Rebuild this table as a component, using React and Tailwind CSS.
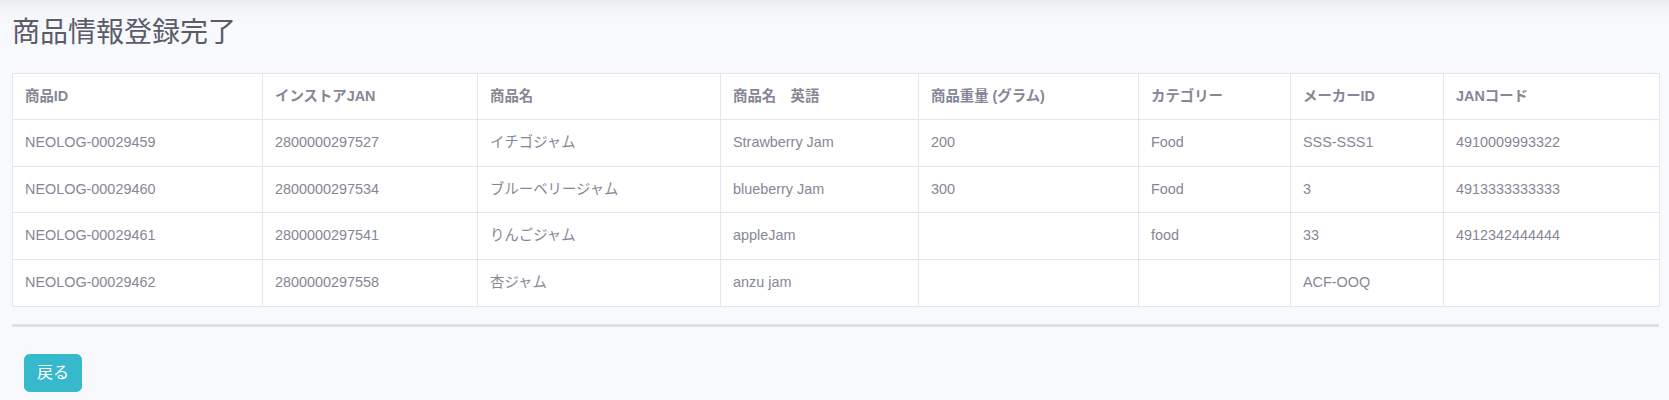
import React from "react";

const columns = [
  { label: "商品ID", width: "w-[250px]" },
  { label: "インストアJAN", width: "w-[215px]" },
  { label: "商品名", width: "w-[243px]" },
  { label: "商品名　英語", width: "w-[198px]" },
  { label: "商品重量 (グラム)", width: "w-[220px]" },
  { label: "カテゴリー", width: "w-[152px]" },
  { label: "メーカーID", width: "w-[153px]" },
  { label: "JANコード", width: "w-[216px]" },
];

const products = [
  ["NEOLOG-00029459", "2800000297527", "イチゴジャム", "Strawberry Jam", "200", "Food", "SSS-SSS1", "4910009993322"],
  ["NEOLOG-00029460", "2800000297534", "ブルーベリージャム", "blueberry Jam", "300", "Food", "3", "4913333333333"],
  ["NEOLOG-00029461", "2800000297541", "りんごジャム", "appleJam", "", "food", "33", "4912342444444"],
  ["NEOLOG-00029462", "2800000297558", "杏ジャム", "anzu jam", "", "", "ACF-OOQ", ""],
];

function App() {
  return (
    <div className="min-h-screen bg-[#f8f9fc] bg-[linear-gradient(to_bottom,#ebecef_0px,#f5f6fa_14px,#f8f9fc_28px)] font-['Liberation_Sans','Noto_Sans_CJK_JP',sans-serif] text-[#858796]">
      <div className="pl-3 pr-[10px] pt-[16px]">
        {/* page title */}
        <h3 className="mb-[23px] text-[28px] leading-[1.2] font-normal text-[#5a5c69]">
          商品情報登録完了
        </h3>

        {/* result table */}
        <table className="w-full table-fixed border-collapse border border-[#e3e6f0] bg-white text-[14.4px] leading-normal">
          <colgroup>
            {columns.map((col) => (
              <col key={col.label} className={col.width} />
            ))}
          </colgroup>
          <thead>
            <tr>
              {columns.map((col) => (
                <th
                  key={col.label}
                  className="border border-[#e3e6f0] px-3 py-3 text-left font-bold whitespace-pre"
                >
                  {col.label}
                </th>
              ))}
            </tr>
          </thead>
          <tbody>
            {products.map((row) => (
              <tr key={row[0]}>
                {row.map((cell, i) => (
                  <td key={i} className="h-[46.6px] border border-[#e3e6f0] px-3 py-3 align-top">
                    {cell}
                  </td>
                ))}
              </tr>
            ))}
          </tbody>
        </table>

        <div className="mt-[17px] h-[3px] bg-[#dfe0e3]" />

        <button className="mt-[27px] ml-3 rounded-[5.6px] border border-[#36b9cc] bg-[#36b9cc] px-3 py-1.5 text-base leading-6 text-white">
          戻る
        </button>
      </div>
    </div>
  );
}

export default App;
